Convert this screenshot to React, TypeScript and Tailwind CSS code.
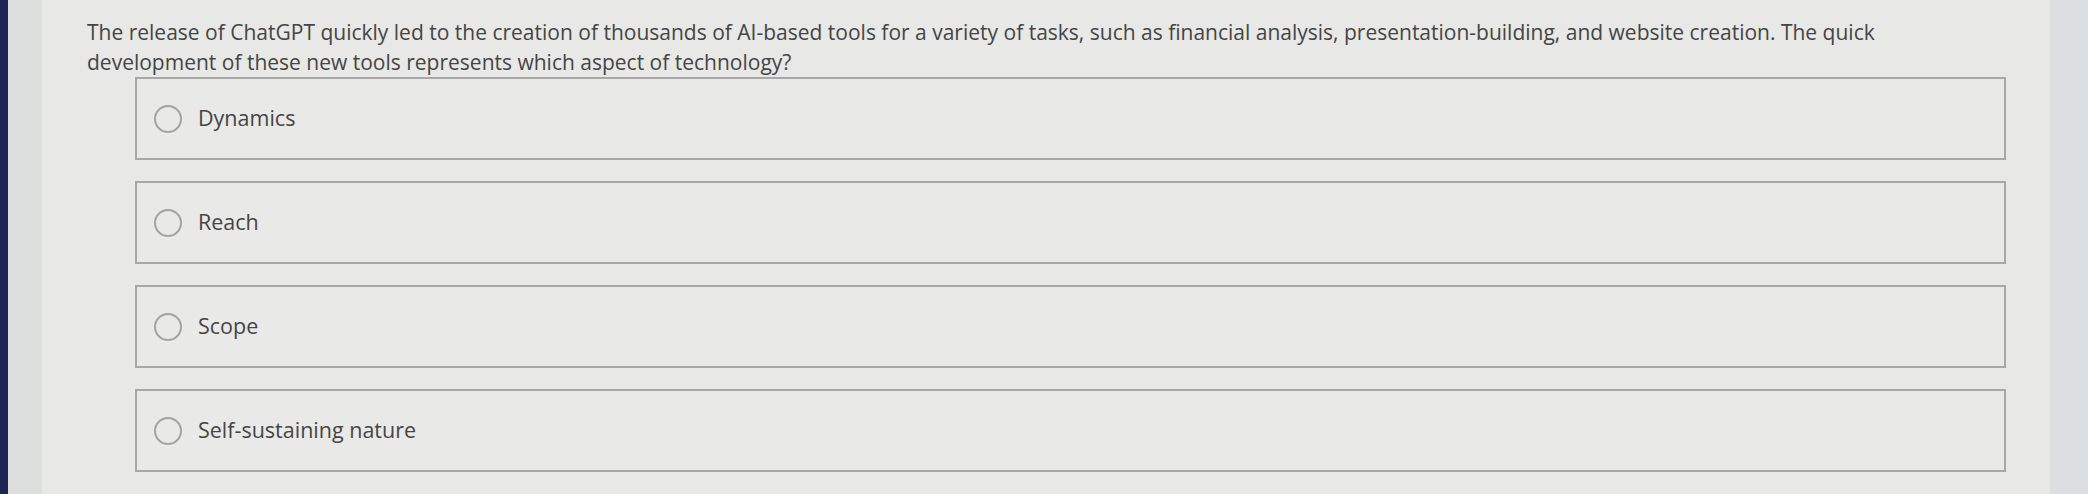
const options = ["Dynamics", "Reach", "Scope", "Self-sustaining nature"];

function Radio() {
  return <span className="w-[28px] h-[28px] rounded-full border-2 border-[#a3a3a3] shrink-0" />;
}

export default function App() {
  return (
    <div className="flex w-[2088px] h-[494px] overflow-hidden bg-[#dcdfe2] font-['Open_Sans',sans-serif]">
      <div className="w-[8px] bg-[#1c2554]" />
      <div className="w-[34px] bg-[#dddede]" />
      <main className="w-[2008px] bg-[#e8e8e6] text-[#454545]">
        <p className="pl-[45px] pr-[120px] pt-[17px] text-[21px] leading-[30px]">
          The release of ChatGPT quickly led to the creation of thousands of AI-based tools for a variety of tasks, such as
          financial analysis, presentation-building, and website creation. The quick development of these new tools
          represents which aspect of technology?
        </p>
        <div className="ml-[93px] mr-[44px] flex flex-col gap-[21px]">
          {options.map((o) => (
            <label key={o} className="h-[83px] border-2 border-[#a8a8a8] bg-[#e9e9e7] flex items-center pl-[17px] gap-[16px]">
              <Radio />
              <span className="text-[21.5px]">{o}</span>
            </label>
          ))}
        </div>
      </main>
    </div>
  );
}
